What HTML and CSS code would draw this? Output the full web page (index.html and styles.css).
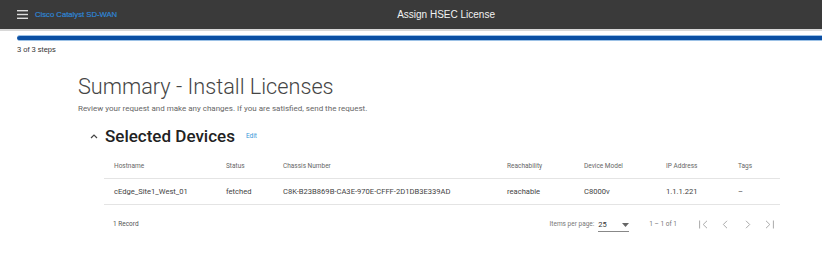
FILE: index.html
```html
<!DOCTYPE html>
<html lang="en">
<head>
    <meta charset="UTF-8">
    <title>Assign HSEC License</title>
    <link rel="stylesheet" href="styles.css">
</head>
<body>
    <header class="topbar">
        <div class="brand">
            <svg class="menu-icon" width="11" height="9" viewBox="0 0 11 9">
                <rect x="0" y="0" width="11" height="1.4" fill="#ddd"/>
                <rect x="0" y="3.8" width="11" height="1.4" fill="#ddd"/>
                <rect x="0" y="7.6" width="11" height="1.4" fill="#ddd"/>
            </svg>
            <span class="brand-name">Cisco Catalyst SD-WAN</span>
        </div>
        <div class="page-title">Assign HSEC License</div>
    </header>

    <div class="steps">
        <div class="progress"></div>
        <div class="steps-label">3 of 3 steps</div>
    </div>

    <main class="content">
        <h1>Summary - Install Licenses</h1>
        <p class="lead">Review your request and make any changes. If you are satisfied, send the request.</p>

        <div class="section-head">
            <svg class="chevron" width="8" height="6" viewBox="0 0 8 6">
                <path d="M1 5 L4 2 L7 5" fill="none" stroke="#444" stroke-width="1.2"/>
            </svg>
            <h2>Selected Devices</h2>
            <a href="#" class="edit">Edit</a>
        </div>

        <table class="devices">
            <thead>
                <tr>
                    <th class="c-host">Hostname</th>
                    <th class="c-status">Status</th>
                    <th class="c-chassis">Chassis Number</th>
                    <th class="c-reach">Reachability</th>
                    <th class="c-model">Device Model</th>
                    <th class="c-ip">IP Address</th>
                    <th class="c-tags">Tags</th>
                </tr>
            </thead>
            <tbody>
                <tr>
                    <td>cEdge_Site1_West_01</td>
                    <td>fetched</td>
                    <td>C8K-B23B869B-CA3E-970E-CFFF-2D1DB3E339AD</td>
                    <td>reachable</td>
                    <td>C8000v</td>
                    <td>1.1.1.221</td>
                    <td>–</td>
                </tr>
            </tbody>
        </table>

        <div class="table-footer">
            <span class="records">1 Record</span>
            <div class="paginator">
                <span class="per-page">Items per page:</span>
                <div class="select">
                    <span>25</span>
                    <svg width="7" height="4" viewBox="0 0 7 4"><path d="M0 0 L7 0 L3.5 4 Z" fill="#666"/></svg>
                </div>
                <span class="range">1 – 1 of 1</span>
                <div class="nav">
                    <svg width="9" height="9" viewBox="0 0 9 9"><path d="M0.6 0.5 V8.5 M8 0.8 L4.2 4.5 L8 8.2" fill="none" stroke="#aaa" stroke-width="1"/></svg>
                    <svg width="9" height="9" viewBox="0 0 9 9"><path d="M6 0.8 L2.3 4.5 L6 8.2" fill="none" stroke="#aaa" stroke-width="1"/></svg>
                    <svg width="9" height="9" viewBox="0 0 9 9"><path d="M3 0.8 L6.7 4.5 L3 8.2" fill="none" stroke="#aaa" stroke-width="1"/></svg>
                    <svg width="9" height="9" viewBox="0 0 9 9"><path d="M1 0.8 L4.8 4.5 L1 8.2 M8.4 0.5 V8.5" fill="none" stroke="#aaa" stroke-width="1"/></svg>
                </div>
            </div>
        </div>
    </main>
</body>
</html>
```

FILE: styles.css
```css
body {
    margin: 0;
    font-family: Roboto, "Liberation Sans", sans-serif;
    color: #444;
    background: #fff;
}
.topbar {
    height: 29px;
    background-color: #3a3a3a;
    border-bottom: 2px solid #d8d8d8;
    display: flex;
    align-items: center;
}
.brand {
    display: flex;
    align-items: center;
    padding-left: 17px;
}
.menu-icon {
    margin-right: 7px;
}
.brand-name {
    font-family: "Liberation Sans", Arial, sans-serif;
    font-size: 7.7px;
    color: #2f86d6;
    -webkit-text-stroke: 0.2px #2f86d6;
}
.page-title {
    font-family: "Liberation Sans", Arial, sans-serif;
    font-size: 10px;
    color: #f2f2f2;
    margin-left: 280px;
}
.steps {
    padding: 4px 0 0 17px;
}
.progress {
    height: 4px;
    background-color: #0b4fa3;
    border-radius: 3px 0 0 3px;
    border-top: 1px solid #9cc1e6;
    border-bottom: 1px solid #9cc1e6;
}
.steps-label {
    font-family: "Liberation Sans", Arial, sans-serif;
    font-size: 7.5px;
    color: #333;
    margin-top: 4px;
}
.content {
    padding: 0 42px 0 78px;
}
h1 {
    font-size: 21.7px;
    font-weight: 300;
    color: #454545;
    margin: 20px 0 0;
    line-height: 26px;
}
.lead {
    font-size: 8px;
    color: #666;
    margin: 4px 0 0;
}
.section-head {
    display: flex;
    align-items: center;
    margin: 12px 0 0 12px;
}
.chevron {
    margin-right: 7px;
}
h2 {
    font-size: 17px;
    font-weight: 500;
    color: #222;
    margin: 0;
    line-height: 22px;
}
.edit {
    font-size: 6.5px;
    color: #3a9ad9;
    text-decoration: none;
    margin-left: 11px;
}
.devices {
    margin: 6px 0 0 26px;
    width: 676px;
    border-collapse: collapse;
    font-size: 7.6px;
}
.devices th {
    text-align: left;
    font-weight: 400;
    color: #666;
    font-size: 6.5px;
    height: 25px;
    padding: 0 0 0 10px;
    border-bottom: 1px solid #e4e4e4;
}
.devices td {
    height: 25px;
    padding: 0 0 0 10px;
    color: #444;
    border-bottom: 1px solid #e4e4e4;
}
.c-host { width: 102px; }
.c-status { width: 47px; }
.c-chassis { width: 214px; }
.c-reach { width: 67px; }
.c-model { width: 72px; }
.c-ip { width: 62px; }
.table-footer {
    display: flex;
    align-items: center;
    justify-content: space-between;
    margin-left: 35px;
    width: 661px;
    height: 38px;
    font-size: 6.5px;
    color: #555;
}
.paginator {
    display: flex;
    align-items: center;
}
.per-page {
    color: #777;
}
.select {
    display: flex;
    align-items: center;
    justify-content: space-between;
    width: 31px;
    margin-left: 4px;
    padding-bottom: 2px;
    border-bottom: 1px solid #888;
    font-size: 7.5px;
    color: #333;
    position: relative;
    top: 2px;
}
.range {
    margin-left: 20px;
    color: #777;
}
.nav {
    display: flex;
    gap: 13px;
    margin-left: 22px;
}
```
